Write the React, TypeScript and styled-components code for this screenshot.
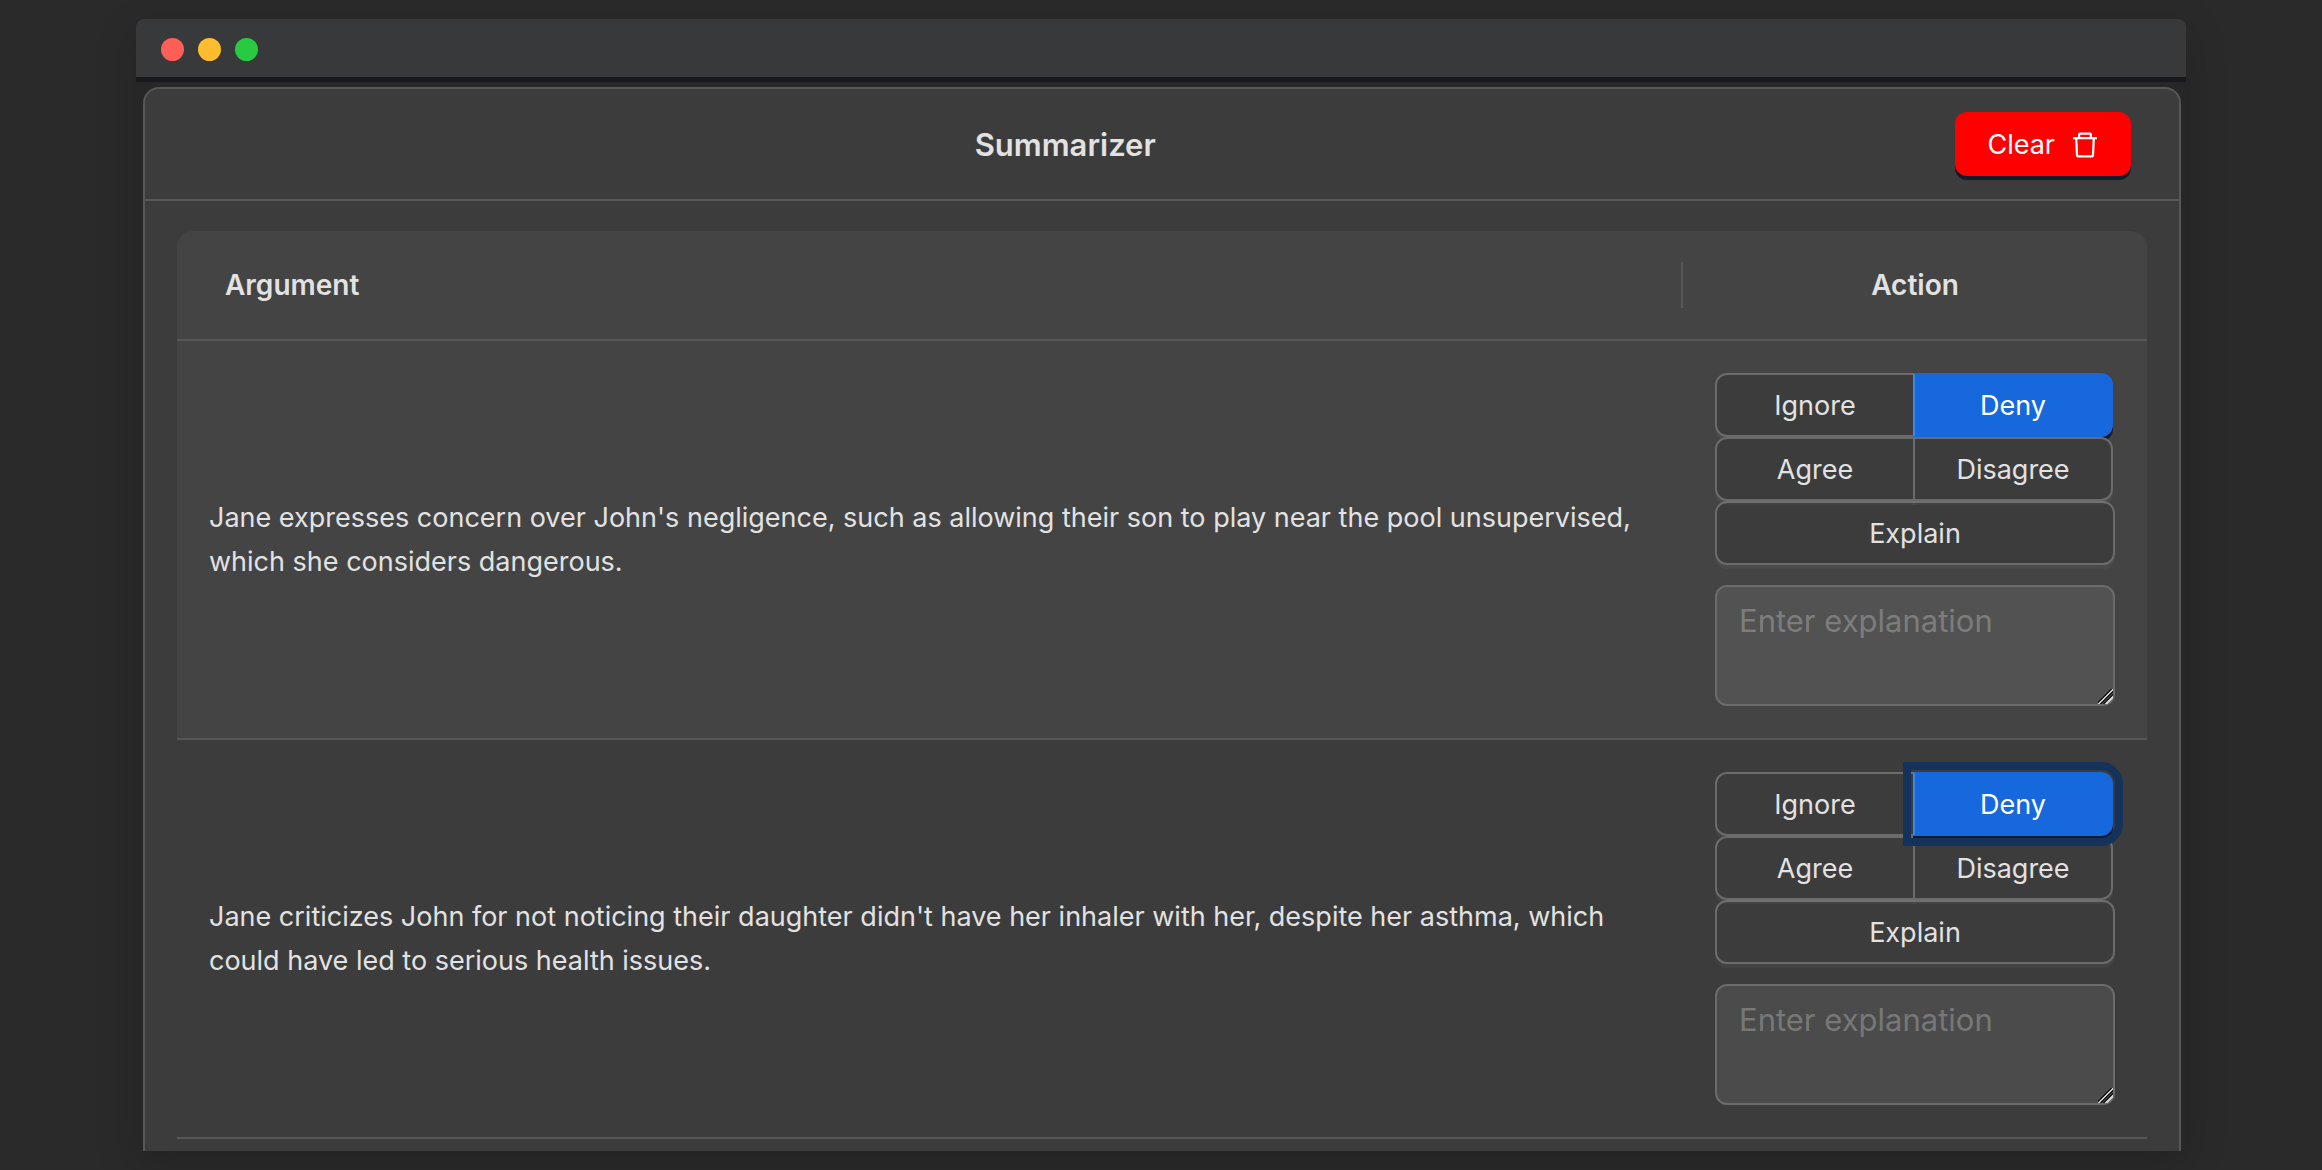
import React, { useState } from "react";
import styled, { createGlobalStyle, css } from "styled-components";
import { AiOutlineDelete } from "react-icons/ai";

const GlobalStyle = createGlobalStyle`
  *, *::before, *::after { box-sizing: border-box; }
  body {
    margin: 0;
    background: #2a2a2a;
    color: #e2e2e2;
    font: 400 27px/44px Inter, "Liberation Sans", sans-serif;
  }
  button, textarea { font: inherit; margin: 0; }
`;

const Page = styled.div`
  display: flex;
  min-height: 100vh;
  padding: 19px 136px;
`;

const Window = styled.div`
  flex: 1;
  min-width: 0;
  display: flex;
  flex-direction: column;
  background: #272727;
  border-radius: 8px 8px 0 0;
  box-shadow: 0 12px 40px rgba(0, 0, 0, 0.18);
`;

const TitleBar = styled.div`
  display: flex;
  align-items: center;
  gap: 14px;
  height: 63px;
  padding: 3px 25px 0;
  background: #38393a;
  border-bottom: 5px solid #18191f;
  border-radius: 8px 8px 0 0;
`;

const Light = styled.span<{ $color: string }>`
  width: 23px;
  height: 23px;
  border-radius: 50%;
  background: ${(p) => p.$color};
`;

const Body = styled.main`
  flex: 1;
  display: flex;
  flex-direction: column;
  padding: 5px 5px 0 7px;
`;

const Card = styled.section`
  flex: 1;
  background: #3c3c3c;
  border: 2px solid #575757;
  border-bottom: 0;
  border-radius: 16px 16px 0 0;
`;

const CardHeader = styled.header`
  display: flex;
  align-items: center;
  gap: 18px;
  height: 112px;
  padding: 0 48px;
  border-bottom: 2px solid #575757;
`;

const Title = styled.h1`
  flex: 1;
  margin: 0;
  padding-top: 2px;
  font-size: 31px;
  line-height: 48px;
  font-weight: 600;
  text-align: center;
`;

const ClearButton = styled.button`
  display: inline-flex;
  align-items: center;
  gap: 14px;
  height: 64px;
  padding: 1px 30px 0 32px;
  color: #fff;
  background: #ff0000;
  border: 0;
  border-radius: 12px;
  box-shadow: 0 4px 0 #111a2c;
  cursor: pointer;
`;

const CardBody = styled.div`
  padding: 30px 32px 11px;
`;

const Table = styled.table`
  width: 100%;
  table-layout: fixed;
  border-collapse: separate;
  border-spacing: 0;
`;

const HeadCell = styled.th<{ $action?: boolean }>`
  position: relative;
  height: 110px;
  padding: 32px 48px;
  background: #444444;
  border-bottom: 2px solid #575757;
  font-size: 28px;
  font-weight: 600;
  text-align: left;
  border-top-left-radius: 16px;
  &::after {
    content: "";
    position: absolute;
    top: 31px;
    right: 0;
    width: 2px;
    height: 46px;
    background: #575757;
  }
  ${(p) =>
    p.$action &&
    css`
      width: 464px;
      text-align: center;
      border-radius: 0 16px 0 0;
      &::after { display: none; }
    `}
`;

const Row = styled.tr<{ $hovered?: boolean }>`
  background: ${(p) => (p.$hovered ? "#444444" : "transparent")};
`;

const Cell = styled.td`
  padding: 32px;
  border-bottom: 2px solid #575757;
  vertical-align: middle;
`;

const Choices = styled.div`
  display: flex;
  flex-direction: column;
`;

const Pair = styled.div`
  display: flex;
  margin-right: 2px;
`;

const Choice = styled.button<{ $on?: boolean; $focus?: boolean }>`
  flex: 1;
  height: 64px;
  padding: 2px 28px 0;
  color: #e2e2e2;
  background: #3c3c3c;
  border: 2px solid #6b6b6b;
  border-radius: 12px;
  box-shadow: 0 4px 0 rgba(255, 255, 255, 0.04);
  cursor: pointer;
  ${Pair} & {
    position: relative;
  }
  ${Pair} &:first-child {
    border-radius: 12px 0 0 12px;
  }
  ${Pair} &:last-child {
    margin-left: -2px;
    flex-basis: 2px;
    border-radius: 0 12px 12px 0;
  }
  ${(p) =>
    p.$on &&
    css`
      color: #fff;
      background: #1668dc;
      border-color: #1668dc;
      box-shadow: 0 4px 0 #111a2c;
      ${Pair} &:last-child { border-left-color: #3c89e8; }
    `}
  ${(p) =>
    p.$focus &&
    css`
      outline: 8px solid #15325b;
      outline-offset: 2px;
      z-index: 2;
    `}
`;

const WideChoice = styled(Choice)`
  flex: none;
`;

const Explanation = styled.textarea`
  display: block;
  width: 100%;
  height: 121px;
  margin-top: 20px;
  padding: 10px 22px;
  color: #e2e2e2;
  background: rgba(255, 255, 255, 0.08);
  border: 2px solid #6b6b6b;
  border-radius: 12px;
  font-size: 31px;
  line-height: 48px;
  resize: vertical;
  &::placeholder {
    color: rgba(255, 255, 255, 0.25);
    opacity: 1;
  }
  &::-webkit-resizer {
    background: linear-gradient(
      135deg,
      transparent 9px,
      #1c1c1c 9px 10px,
      #d0d0d0 10px 12px,
      #1c1c1c 12px 13px,
      transparent 13px 14px,
      #1c1c1c 14px 15px,
      #d0d0d0 15px 17px,
      transparent 17px
    );
  }
`;

type ChoiceName = "Ignore" | "Deny" | "Agree" | "Disagree" | "Explain";

const pairs: ChoiceName[][] = [
  ["Ignore", "Deny"],
  ["Agree", "Disagree"],
];

const summaries = [
  {
    text: "Jane expresses concern over John's negligence, such as allowing their son to play near the pool unsupervised, which she considers dangerous.",
    hovered: true,
  },
  {
    text: "Jane criticizes John for not noticing their daughter didn't have her inhaler with her, despite her asthma, which could have led to serious health issues.",
    focused: true,
  },
];

function ArgumentRow({ text, hovered, focused }: { text: string; hovered?: boolean; focused?: boolean }) {
  const [choice, setChoice] = useState<ChoiceName>("Deny");
  return (
    <Row $hovered={hovered}>
      <Cell>{text}</Cell>
      <Cell>
        <Choices>
          {pairs.map((pair) => (
            <Pair key={pair[0]}>
              {pair.map((name) => (
                <Choice
                  key={name}
                  type="button"
                  aria-pressed={choice === name}
                  $on={choice === name}
                  $focus={focused && choice === name}
                  onClick={() => setChoice(name)}
                >
                  {name}
                </Choice>
              ))}
            </Pair>
          ))}
          <WideChoice
            type="button"
            aria-pressed={choice === "Explain"}
            $on={choice === "Explain"}
            onClick={() => setChoice("Explain")}
          >
            Explain
          </WideChoice>
        </Choices>
        <Explanation aria-label="Enter explanation" placeholder="Enter explanation" />
      </Cell>
    </Row>
  );
}

export default function App() {
  return (
    <>
      <GlobalStyle />
      <Page>
        <Window>
          <TitleBar>
            <Light $color="#ff5f57" />
            <Light $color="#ffbd2e" />
            <Light $color="#28ca42" />
          </TitleBar>
          <Body>
            <Card>
              <CardHeader>
                <Title>Summarizer</Title>
                <ClearButton type="button">
                  Clear
                  <AiOutlineDelete size={32} aria-hidden />
                </ClearButton>
              </CardHeader>
              <CardBody>
                <Table>
                  <thead>
                    <tr>
                      <HeadCell scope="col">Argument</HeadCell>
                      <HeadCell scope="col" $action>Action</HeadCell>
                    </tr>
                  </thead>
                  <tbody>
                    {summaries.map((s) => (
                      <ArgumentRow key={s.text} {...s} />
                    ))}
                  </tbody>
                </Table>
              </CardBody>
            </Card>
          </Body>
        </Window>
      </Page>
    </>
  );
}
